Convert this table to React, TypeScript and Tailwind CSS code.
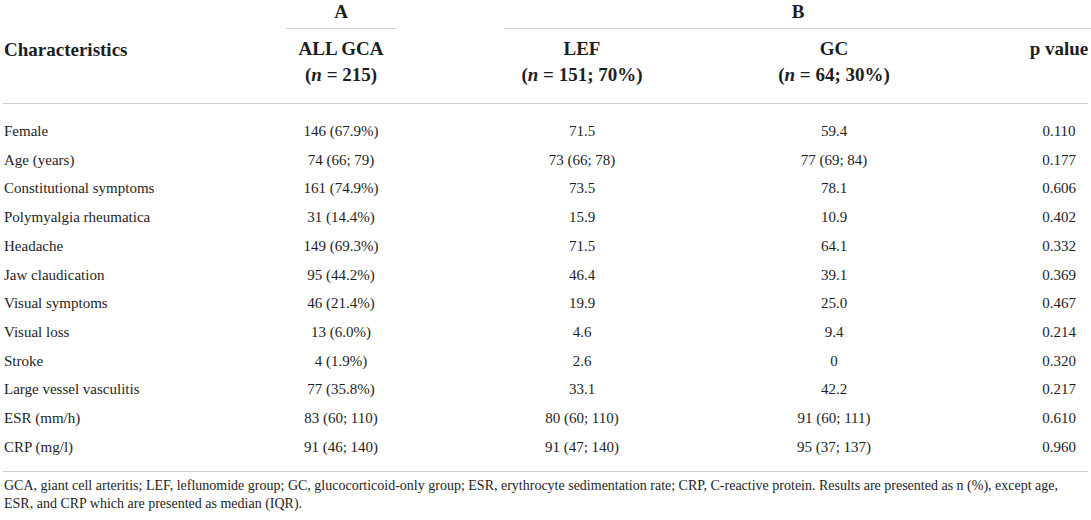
import React from 'react';

type Row = {
  label: string;
  all: string;
  lef: string;
  gc: string;
  p: string;
};

const rows: Row[] = [
  { label: 'Female', all: '146 (67.9%)', lef: '71.5', gc: '59.4', p: '0.110' },
  { label: 'Age (years)', all: '74 (66; 79)', lef: '73 (66; 78)', gc: '77 (69; 84)', p: '0.177' },
  { label: 'Constitutional symptoms', all: '161 (74.9%)', lef: '73.5', gc: '78.1', p: '0.606' },
  { label: 'Polymyalgia rheumatica', all: '31 (14.4%)', lef: '15.9', gc: '10.9', p: '0.402' },
  { label: 'Headache', all: '149 (69.3%)', lef: '71.5', gc: '64.1', p: '0.332' },
  { label: 'Jaw claudication', all: '95 (44.2%)', lef: '46.4', gc: '39.1', p: '0.369' },
  { label: 'Visual symptoms', all: '46 (21.4%)', lef: '19.9', gc: '25.0', p: '0.467' },
  { label: 'Visual loss', all: '13 (6.0%)', lef: '4.6', gc: '9.4', p: '0.214' },
  { label: 'Stroke', all: '4 (1.9%)', lef: '2.6', gc: '0', p: '0.320' },
  { label: 'Large vessel vasculitis', all: '77 (35.8%)', lef: '33.1', gc: '42.2', p: '0.217' },
  { label: 'ESR (mm/h)', all: '83 (60; 110)', lef: '80 (60; 110)', gc: '91 (60; 111)', p: '0.610' },
  { label: 'CRP (mg/l)', all: '91 (46; 140)', lef: '91 (47; 140)', gc: '95 (37; 137)', p: '0.960' },
];

// same column template on every row so the columns line up
const cols = 'grid grid-cols-[280px_116px_105px_156px_348px_20px_62px]';

export default function App() {
  return (
    <div
      className="min-h-[520px] w-[1091px] bg-white pl-[3px] pr-[3px] text-[#1e1e1e]"
      style={{ fontFamily: '"Liberation Serif", "Times New Roman", serif' }}
    >
      {/* group header */}
      <div className={`${cols} h-[29px] text-[19px] font-bold leading-[24px]`}>
        <div />
        <div className="mx-[3px] border-b border-[#cdcdcd] text-center">A</div>
        <div />
        <div className="col-span-4 -mr-[2px] border-b border-[#cdcdcd] text-center">B</div>
      </div>

      {/* column header */}
      <div className={`${cols} h-[75px] border-b border-[#cdcdcd] pt-[7px] text-[19px] font-bold leading-[26px]`}>
        <div className="pl-px pt-[1px]">Characteristics</div>
        <div className="flex flex-col items-center whitespace-nowrap">
          <span>ALL GCA</span>
          <span>
            (<i>n</i> = 215)
          </span>
        </div>
        <div />
        <div className="flex flex-col items-center whitespace-nowrap">
          <span>LEF</span>
          <span>
            (<i>n</i> = 151; 70%)
          </span>
        </div>
        <div className="flex flex-col items-center whitespace-nowrap">
          <span>GC</span>
          <span>
            (<i>n</i> = 64; 30%)
          </span>
        </div>
        <div />
        <div className="flex justify-center whitespace-nowrap">p value</div>
      </div>

      {/* body */}
      <div className="border-b border-[#cdcdcd] pt-[13px] pb-[10px] text-[15px]">
        {rows.map((r) => (
          <div key={r.label} className={`${cols} h-[28.7px] items-center`}>
            <div className="pl-px whitespace-nowrap">{r.label}</div>
            <div className="text-center">{r.all}</div>
            <div />
            <div className="text-center">{r.lef}</div>
            <div className="text-center">{r.gc}</div>
            <div />
            <div className="text-center">{r.p}</div>
          </div>
        ))}
      </div>

      <p className="pt-[5px] pl-px text-[14px] leading-[18px]">
        GCA, giant cell arteritis; LEF, leflunomide group; GC, glucocorticoid-only group; ESR,
        erythrocyte sedimentation rate; CRP, C-reactive protein. Results are presented as n (%),
        except age, ESR, and CRP which are presented as median (IQR).
      </p>
    </div>
  );
}
